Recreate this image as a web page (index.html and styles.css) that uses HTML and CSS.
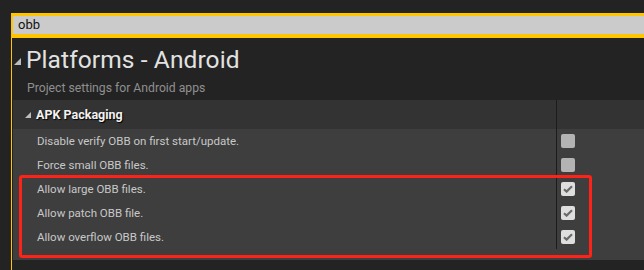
FILE: index.html
```html
<!DOCTYPE html>
<html lang="en">
<head>
    <meta charset="UTF-8">
    <title>Platforms - Android</title>
    <link rel="stylesheet" href="styles.css">
</head>
<body>
    <div class="search">obb</div>
    <div class="panel">
        <div class="section-title">
            <svg class="tri tri-big" width="7" height="7" viewBox="0 0 7 7"><polygon points="7,0 7,7 0,7" /></svg>
            <h1>Platforms - Android</h1>
        </div>
        <p class="subtitle">Project settings for Android apps</p>

        <div class="category">
            <div class="category-head">
                <div class="name-col">
                    <svg class="tri" width="6" height="6" viewBox="0 0 6 6"><polygon points="6,0 6,6 0,6" /></svg>
                    <span>APK Packaging</span>
                </div>
                <div class="value-col"></div>
            </div>
            <div class="rows">
                <div class="row">
                    <div class="name-col">Disable verify OBB on first start/update.</div>
                    <div class="value-col"><span class="check"></span></div>
                </div>
                <div class="row">
                    <div class="name-col">Force small OBB files.</div>
                    <div class="value-col"><span class="check"></span></div>
                </div>
                <div class="row">
                    <div class="name-col">Allow large OBB files.</div>
                    <div class="value-col"><span class="check checked"><svg width="10" height="8" viewBox="0 0 10 8"><path d="M1 4.2 L3.6 6.6 L9 1.2" /></svg></span></div>
                </div>
                <div class="row">
                    <div class="name-col">Allow patch OBB file.</div>
                    <div class="value-col"><span class="check checked"><svg width="10" height="8" viewBox="0 0 10 8"><path d="M1 4.2 L3.6 6.6 L9 1.2" /></svg></span></div>
                </div>
                <div class="row">
                    <div class="name-col">Allow overflow OBB files.</div>
                    <div class="value-col"><span class="check checked"><svg width="10" height="8" viewBox="0 0 10 8"><path d="M1 4.2 L3.6 6.6 L9 1.2" /></svg></span></div>
                </div>
            </div>
        </div>
        <div class="highlight"></div>
    </div>
</body>
</html>
```

FILE: styles.css
```css
body {
    margin: 0;
    background-color: #232323;
    font-family: Roboto, "Liberation Sans", sans-serif;
    overflow: hidden;
}

.search {
    margin: 13px 0 0 11px;
    height: 18px;
    line-height: 18px;
    background-color: #cbcbcb;
    border: 3px solid #ffc600;
    border-left-width: 2px;
    border-right: 0;
    border-bottom-width: 4px;
    padding-left: 5px;
    font-size: 13px;
    color: #111;
}

.panel {
    position: relative;
    margin-left: 11px;
    border-left: 1px solid #ffc600;
    height: 240px;
}

.section-title {
    display: flex;
    align-items: center;
    height: 42px;
    padding-left: 2px;
}

.tri {
    fill: #bdbdbd;
}

.tri-big {
    margin-top: 4px;
    margin-right: 5px;
}

h1 {
    margin: 0;
    font-size: 24.5px;
    font-weight: normal;
    color: #e2e2e2;
    letter-spacing: 0.1px;
}

.subtitle {
    margin: 0;
    height: 20px;
    padding-left: 15px;
    line-height: 16px;
    font-size: 12.2px;
    color: #8f8f8f;
}

.category {
    margin-left: 1px;
}

.category-head,
.row {
    display: grid;
    grid-template-columns: 543px 1px 1fr;
}

.category-head {
    height: 29px;
    background-color: #333333;
}

.category-head .name-col {
    display: flex;
    align-items: center;
    gap: 5px;
    padding-left: 12px;
    font-size: 12.5px;
    font-weight: bold;
    color: #f2f2f2;
    text-shadow: 1px 1px 1px #000;
}

.category-head::after,
.row::after {
    content: "";
    order: 1;
    background-color: #1c1c1c;
}

.value-col {
    order: 2;
    display: flex;
    align-items: center;
    padding-left: 4px;
}

.rows {
    background-color: #3e3e3e;
    padding-bottom: 11px;
}

.rows .name-col {
    padding-left: 24px;
    font-size: 11.5px;
    color: #c8c8c8;
    line-height: 24px;
}

.row {
    height: 24px;
}

.check {
    width: 14px;
    height: 14px;
    border-radius: 2px;
    background-color: #b3b3b3;
    display: flex;
    align-items: center;
    justify-content: center;
}

.check.checked {
    background-color: #dedede;
}

.check svg path {
    fill: none;
    stroke: #6a6a6a;
    stroke-width: 2.2;
}

.highlight {
    position: absolute;
    left: 7px;
    top: 137px;
    width: 567px;
    height: 77px;
    border: 3px solid #ff2218;
    border-radius: 3px;
}
```
